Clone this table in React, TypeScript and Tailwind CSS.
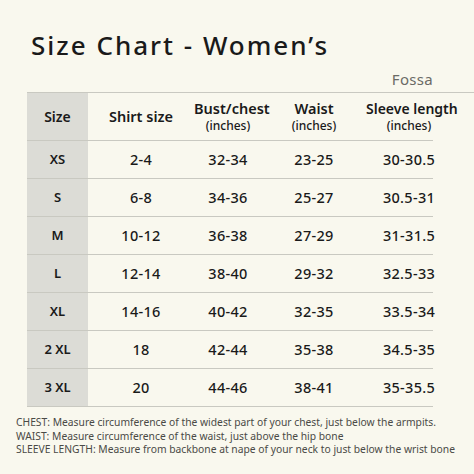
const rows = [
  { size: "XS", shirt: "2-4", bust: "32-34", waist: "23-25", sleeve: "30-30.5" },
  { size: "S", shirt: "6-8", bust: "34-36", waist: "25-27", sleeve: "30.5-31" },
  { size: "M", shirt: "10-12", bust: "36-38", waist: "27-29", sleeve: "31-31.5" },
  { size: "L", shirt: "12-14", bust: "38-40", waist: "29-32", sleeve: "32.5-33" },
  { size: "XL", shirt: "14-16", bust: "40-42", waist: "32-35", sleeve: "33.5-34" },
  { size: "2 XL", shirt: "18", bust: "42-44", waist: "35-38", sleeve: "34.5-35" },
  { size: "3 XL", shirt: "20", bust: "44-46", waist: "38-41", sleeve: "35-35.5" },
];

const gridCols = "grid grid-cols-[61px_106px_68px_104px_86px] w-[406px]";

export default function App() {
  return (
    <div
      className="w-[474px] h-[474px] bg-[#f9f8ee] text-[#1a1a1a] overflow-hidden"
      style={{ fontFamily: '"Noto Sans", "Open Sans", sans-serif' }}
    >
      {/* Title */}
      <h1 className="pl-[31px] pt-[28px] text-[26px] leading-[34px] font-medium tracking-[2px]">
        Size Chart - Women’s
      </h1>
      <div className="w-[433px] text-right text-[15px] leading-[18px] text-[#6b6b66] mt-[8px] tracking-[0.3px]">
        Fossa
      </div>

      {/* Table */}
      <div className="ml-[27px] mt-[4px] border-t border-[#c9c9c1]">
        <div className={`${gridCols} h-[48px] border-b border-[#c9c9c1] items-center`}>
          <div className="h-full bg-[#dcdcd6] flex items-center justify-center text-[14px] font-semibold">
            Size
          </div>
          <div className="text-center text-[14.5px] font-semibold">Shirt size</div>
          <div className="text-center leading-[17px]">
            <div className="text-[14.5px] font-semibold whitespace-nowrap">Bust/chest</div>
            <div className="text-[12px] font-medium">(inches)</div>
          </div>
          <div className="text-center leading-[17px]">
            <div className="text-[14.5px] font-semibold">Waist</div>
            <div className="text-[12px] font-medium">(inches)</div>
          </div>
          <div className="text-center leading-[17px]">
            <div className="text-[14px] font-semibold whitespace-nowrap">Sleeve length</div>
            <div className="text-[12px] font-medium">(inches)</div>
          </div>
        </div>

        {rows.map((r) => (
          <div
            key={r.size}
            className={`${gridCols} h-[38px] border-b border-[#c9c9c1] items-center text-[14.5px] font-medium tracking-[0.3px]`}
          >
            <div className="h-full bg-[#dcdcd6] flex items-center justify-center text-[13px] font-semibold tracking-normal">
              {r.size}
            </div>
            <div className="text-center">{r.shirt}</div>
            <div className="text-center">{r.bust}</div>
            <div className="text-center">{r.waist}</div>
            <div className="text-center whitespace-nowrap">{r.sleeve}</div>
          </div>
        ))}
      </div>

      {/* Notes */}
      <div className="pl-[16px] mt-[9px] text-[10.3px] leading-[13.5px] text-[#4a4a46]">
        <p>CHEST: Measure circumference of the widest part of your chest, just below the armpits.</p>
        <p>WAIST: Measure circumference of the waist, just above the hip bone</p>
        <p>SLEEVE LENGTH: Measure from backbone at nape of your neck to just below the wrist bone</p>
      </div>
    </div>
  );
}
